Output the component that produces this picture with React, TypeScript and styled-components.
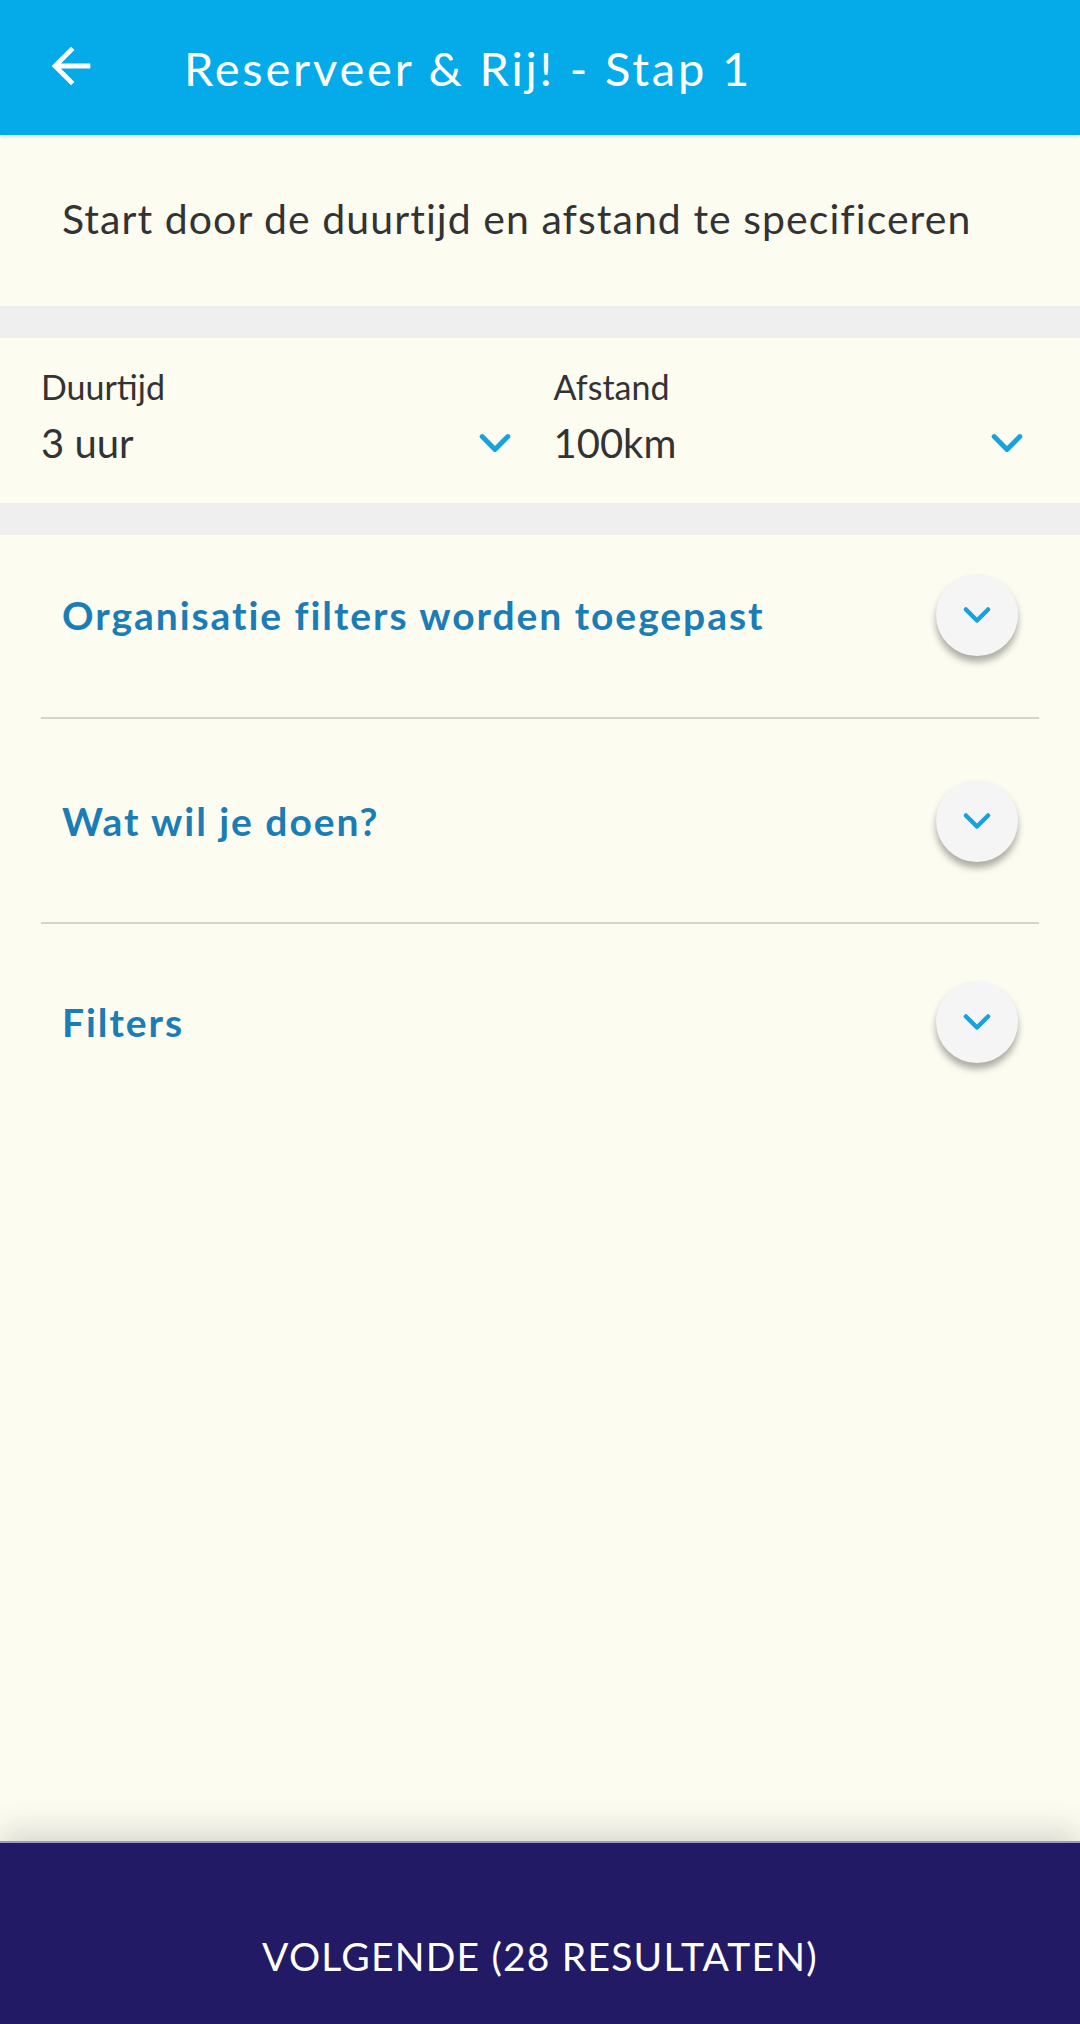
import styled, { createGlobalStyle } from 'styled-components'

const GlobalStyle = createGlobalStyle`
  html, body {
    margin: 0;
    padding: 0;
    background: #fdfcf1;
    font-family: Lato, "Open Sans", "Liberation Sans", sans-serif;
  }
  * {
    box-sizing: border-box;
  }
`

const Chevron = ({ size, width }: { size: number; width: number }) => (
  <svg width={size} height={size} viewBox="0 0 24 24" fill="none">
    <polyline
      points="5 8.5 12 15.5 19 8.5"
      stroke="#18a2dc"
      strokeWidth={width}
      strokeLinecap="round"
      strokeLinejoin="round"
    />
  </svg>
)

function App() {
  const items = ['Organisatie filters worden toegepast', 'Wat wil je doen?', 'Filters']

  return (
    <Page>
      <GlobalStyle />
      <Header>
        <BackButton>
          <svg width="58" height="58" viewBox="0 0 24 24">
            <path fill="#fff" d="M20 11H7.83l5.59-5.59L12 4l-8 8 8 8 1.41-1.41L7.83 13H20v-2z" />
          </svg>
        </BackButton>
        <Title>Reserveer &amp; Rij! - Stap 1</Title>
      </Header>

      <Intro>Start door de duurtijd en afstand te specificeren</Intro>
      <Band />

      <Selects>
        <Select>
          <SelectLabel>Duurtijd</SelectLabel>
          <SelectRow>
            <SelectValue>3 uur</SelectValue>
            <Chevron size={44} width={2.7} />
          </SelectRow>
        </Select>
        <Select>
          <SelectLabel>Afstand</SelectLabel>
          <SelectRow>
            <SelectValue>100km</SelectValue>
            <Chevron size={44} width={2.7} />
          </SelectRow>
        </Select>
      </Selects>
      <Band />

      <Accordion>
        {items.map((label, i) => (
          <Item key={label} $first={i === 0} $last={i === items.length - 1}>
            <ItemTitle>{label}</ItemTitle>
            <ToggleButton>
              <Chevron size={38} width={2.8} />
            </ToggleButton>
          </Item>
        ))}
      </Accordion>

      <Spacer />

      <Footer>
        <FooterText>VOLGENDE (28 RESULTATEN)</FooterText>
      </Footer>
    </Page>
  )
}

export default App

const Page = styled.div`
  min-height: 100vh;
  display: flex;
  flex-direction: column;
  background: #fdfcf1;
`

const Header = styled.div`
  height: 135px;
  background: #04abe8;
  display: flex;
  align-items: center;
  padding-left: 42px;
  box-shadow: 0 2px 3px rgba(0, 0, 0, 0.12);
  position: relative;
  z-index: 2;
`

const BackButton = styled.div`
  width: 58px;
  height: 58px;
  display: flex;
  margin-right: 84px;
  margin-top: -4px;
`

const Title = styled.h1`
  margin: 0;
  font-size: 47px;
  font-weight: 400;
  color: #fff;
  letter-spacing: 2.8px;
`

const Intro = styled.p`
  margin: 0;
  height: 171px;
  display: flex;
  align-items: center;
  padding: 0 62px 4px;
  font-size: 41px;
  color: #333;
  letter-spacing: 1.05px;
`

const Band = styled.div`
  height: 32px;
  background: #efefef;
`

const Selects = styled.div`
  height: 165px;
  display: grid;
  grid-template-columns: 1fr 1fr;
  column-gap: 37px;
  padding: 28px 51px 0 41px;
`

const Select = styled.div`
  display: flex;
  flex-direction: column;
`

const SelectLabel = styled.span`
  font-size: 34px;
  color: #333;
  line-height: 42px;
`

const SelectRow = styled.div`
  display: flex;
  align-items: center;
  justify-content: space-between;
  margin-top: 12px;
`

const SelectValue = styled.span`
  font-size: 40px;
  color: #333;
  line-height: 46px;
`

const Accordion = styled.div`
  padding: 0 41px;
`

const Item = styled.div<{ $first: boolean; $last: boolean }>`
  display: flex;
  align-items: center;
  justify-content: space-between;
  height: ${(p) => (p.$first ? 184 : 205)}px;
  padding-bottom: ${(p) => (p.$first ? 22 : p.$last ? 10 : 0)}px;
  padding-left: 21px;
  border-bottom: ${(p) => (p.$last ? 'none' : '2px solid #d4d4cc')};
`

const ItemTitle = styled.span`
  font-size: 39px;
  font-weight: 700;
  color: #1b7db5;
  letter-spacing: 1.95px;
`

const ToggleButton = styled.div`
  width: 82px;
  height: 82px;
  border-radius: 50%;
  background: #f5f5f5;
  display: flex;
  align-items: center;
  justify-content: center;
  margin-right: 21px;
  box-shadow: 0 6px 7px rgba(0, 0, 0, 0.32);
`

const Spacer = styled.div`
  flex: 1;
`

const Footer = styled.div`
  height: 183px;
  background: #231a66;
  border-top: 2px solid #9d98c4;
  display: flex;
  align-items: center;
  justify-content: center;
  padding-top: 44px;
  box-shadow: 0 -10px 30px rgba(0, 0, 0, 0.15);
`

const FooterText = styled.span`
  color: #fff;
  font-size: 39px;
  letter-spacing: 1.2px;
`
